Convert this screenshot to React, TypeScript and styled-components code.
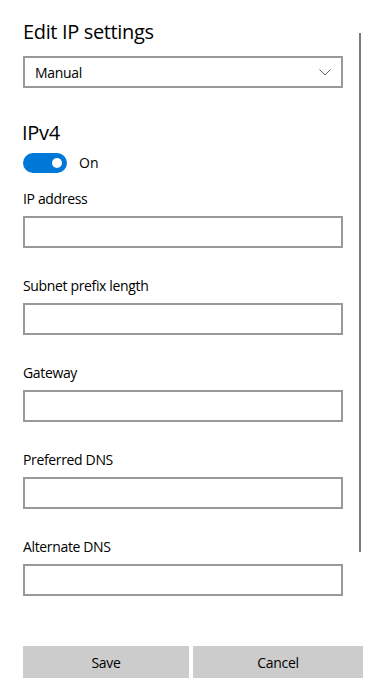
import React from 'react'
import styled, { createGlobalStyle } from 'styled-components'

const GlobalStyle = createGlobalStyle`
  body {
    margin: 0;
    background: #fff;
    font-family: 'Segoe UI', 'Open Sans', 'Noto Sans', sans-serif;
    color: #000;
  }
`

const Page = styled.div`
  width: 386px;
  height: 698px;
  display: flex;
  flex-direction: column;
  box-sizing: border-box;
  padding: 18px 0 0 23px;
`

const ScrollArea = styled.div`
  position: relative;
  width: 340px;
  height: 611px;
`

// thin scroll indicator laid over the right edge of the form
const ScrollThumb = styled.div`
  position: absolute;
  top: 15px;
  right: 2px;
  width: 2px;
  height: 519px;
  background: #7a7a7a;
`

const Form = styled.div`
  width: 320px;
  display: flex;
  flex-direction: column;
`

const Title = styled.h1`
  margin: 0;
  font-size: 20px;
  font-weight: 400;
  line-height: 28px;
  letter-spacing: -0.35px;
`

const Select = styled.div`
  margin-top: 10px;
  height: 32px;
  box-sizing: border-box;
  border: 2px solid #999;
  display: flex;
  align-items: center;
  justify-content: space-between;
  padding: 0 10px;
  font-size: 14px;
  letter-spacing: -0.3px;
`

const Section = styled.h2`
  margin: 31px 0 0 -1px;
  font-size: 20px;
  font-weight: 400;
  line-height: 28px;
  letter-spacing: -0.3px;
`

const ToggleRow = styled.div`
  margin-top: 6px;
  display: flex;
  align-items: center;
  gap: 12px;
  font-size: 14px;
  line-height: 20px;
`

const Toggle = styled.div<{ $on: boolean }>`
  width: 44px;
  height: 20px;
  border-radius: 10px;
  background: ${p => (p.$on ? '#0078d7' : '#fff')};
  display: flex;
  align-items: center;
  justify-content: ${p => (p.$on ? 'flex-end' : 'flex-start')};
  padding: 0 5px;
  box-sizing: border-box;

  &::after {
    content: '';
    width: 10px;
    height: 10px;
    border-radius: 50%;
    background: #fff;
  }
`

const Fields = styled.div`
  display: flex;
  flex-direction: column;
  gap: 28px;
  margin-top: 16px;
`

const Field = styled.div`
  display: flex;
  flex-direction: column;
  gap: 7px;
`

const Label = styled.label`
  font-size: 14px;
  line-height: 20px;
  letter-spacing: -0.35px;
`

const Input = styled.div`
  height: 32px;
  box-sizing: border-box;
  border: 2px solid #999;
`

const Footer = styled.div`
  display: grid;
  grid-template-columns: 166px 170px;
  gap: 4px;
  margin-top: 17px;
`

const Button = styled.button`
  height: 32px;
  border: none;
  background: #ccc;
  font-family: inherit;
  font-size: 14px;
  letter-spacing: -0.3px;
  color: #000;
  padding: 0;
`

const Chevron = () => (
  <svg width="12" height="7" viewBox="0 0 12 7">
    <path d="M0.5 0.5 L6 6 L11.5 0.5" fill="none" stroke="#666" strokeWidth="1" />
  </svg>
)

const fields = ['IP address', 'Subnet prefix length', 'Gateway', 'Preferred DNS', 'Alternate DNS']

export default function App() {
  return (
    <>
      <GlobalStyle />
      <Page>
        <ScrollArea>
          <Form>
            <Title>Edit IP settings</Title>
            <Select>
              <span>Manual</span>
              <Chevron />
            </Select>
            <Section>IPv4</Section>
            <ToggleRow>
              <Toggle $on />
              <span>On</span>
            </ToggleRow>
            <Fields>
              {fields.map(f => (
                <Field key={f}>
                  <Label>{f}</Label>
                  <Input />
                </Field>
              ))}
            </Fields>
          </Form>
          <ScrollThumb />
        </ScrollArea>
        <Footer>
          <Button>Save</Button>
          <Button>Cancel</Button>
        </Footer>
      </Page>
    </>
  )
}
